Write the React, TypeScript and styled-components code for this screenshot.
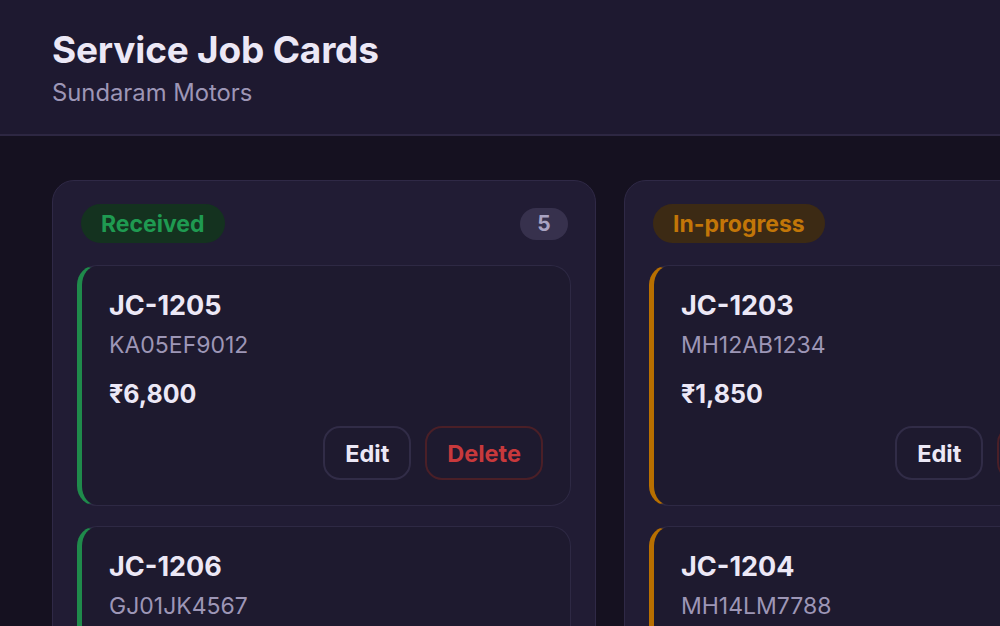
import styled, { createGlobalStyle } from "styled-components";

const colors = {
  page: "#151120",
  header: "#1e1930",
  headerLine: "#2d2742",
  column: "#211c34",
  columnBorder: "#2f2946",
  card: "#1e1a2f",
  cardBorder: "#2e2944",
  text: "#ece8f6",
  muted: "#9d96b6",
  danger: "#c8393c",
  dangerBorder: "#4a1f27",
};

const statuses = {
  received: { label: "Received", fg: "#1f9a51", bg: "#14321f", bar: "#1f8a4b" },
  progress: { label: "In-progress", fg: "#c27608", bg: "#3c2a14", bar: "#b86f00" },
};

type StatusKey = keyof typeof statuses;

const GlobalStyle = createGlobalStyle`
  html, body {
    margin: 0;
    padding: 0;
    background: ${colors.page};
    overflow: hidden;
  }
  body {
    font-family: Inter, "Noto Sans", sans-serif;
    color: ${colors.text};
  }
`;

const Page = styled.div`
  min-height: 100vh;
  background: ${colors.page};
`;

const Header = styled.header`
  background: ${colors.header};
  border-bottom: 2px solid ${colors.headerLine};
  padding: 28px 52px 26px;
`;

const Title = styled.h1`
  margin: 0;
  font-size: 37px;
  line-height: 44px;
  font-weight: 700;
  letter-spacing: -0.2px;
`;

const Subtitle = styled.div`
  margin-top: 6px;
  font-size: 23.8px;
  line-height: 30px;
  color: ${colors.muted};
`;

const Board = styled.main`
  display: flex;
  gap: 28px;
  padding: 44px 52px;
`;

const Column = styled.section`
  flex: 0 0 544px;
  box-sizing: border-box;
  background: ${colors.column};
  border: 1px solid ${colors.columnBorder};
  border-radius: 22px;
  padding: 23px 24px;
  display: flex;
  flex-direction: column;
  gap: 20px;
`;

const ColumnHead = styled.div`
  display: flex;
  align-items: center;
  justify-content: space-between;
  padding: 0 3px 0 4px;
  margin-bottom: 2px;
`;

const Pill = styled.span<{ $status: StatusKey }>`
  display: inline-flex;
  align-items: center;
  height: 39px;
  padding: 0 20px;
  border-radius: 20px;
  font-size: 23px;
  font-weight: 700;
  color: ${(p) => statuses[p.$status].fg};
  background: ${(p) => statuses[p.$status].bg};
`;

const Count = styled.span`
  display: inline-flex;
  align-items: center;
  justify-content: center;
  min-width: 48px;
  height: 32px;
  border-radius: 16px;
  background: #37314d;
  color: #aaa3c2;
  font-size: 21px;
  font-weight: 700;
`;

const Card = styled.article<{ $status: StatusKey }>`
  background: ${colors.card};
  border: 1px solid ${colors.cardBorder};
  border-left: 5px solid ${(p) => statuses[p.$status].bar};
  border-radius: 20px;
  padding: 24px 27px 25px 27px;
`;

const JobId = styled.div`
  font-size: 27px;
  line-height: 32px;
  font-weight: 700;
`;

const Plate = styled.div`
  margin-top: 8px;
  font-size: 23px;
  line-height: 30px;
  color: ${colors.muted};
`;

const Amount = styled.div`
  margin-top: 18px;
  font-size: 25px;
  line-height: 32px;
  font-weight: 700;
`;

const Actions = styled.div`
  margin-top: 16px;
  display: flex;
  justify-content: flex-end;
  gap: 14px;
`;

const Button = styled.button<{ $danger?: boolean }>`
  height: 54px;
  padding: 0 20px;
  border-radius: 17px;
  background: transparent;
  border: 2px solid ${(p) => (p.$danger ? colors.dangerBorder : "#312c47")};
  color: ${(p) => (p.$danger ? colors.danger : colors.text)};
  font-family: inherit;
  font-size: 23.5px;
  font-weight: 700;
  cursor: pointer;
`;

const columns: { status: StatusKey; count: number; jobs: { id: string; plate: string; amount: string }[] }[] = [
  {
    status: "received",
    count: 5,
    jobs: [
      { id: "JC-1205", plate: "KA05EF9012", amount: "₹6,800" },
      { id: "JC-1206", plate: "GJ01JK4567", amount: "₹3,200" },
    ],
  },
  {
    status: "progress",
    count: 2,
    jobs: [
      { id: "JC-1203", plate: "MH12AB1234", amount: "₹1,850" },
      { id: "JC-1204", plate: "MH14LM7788", amount: "₹4,500" },
    ],
  },
];

const App = () => (
  <Page>
    <GlobalStyle />
    <Header>
      <Title>Service Job Cards</Title>
      <Subtitle>Sundaram Motors</Subtitle>
    </Header>
    <Board>
      {columns.map((col) => (
        <Column key={col.status}>
          <ColumnHead>
            <Pill $status={col.status}>{statuses[col.status].label}</Pill>
            <Count>{col.count}</Count>
          </ColumnHead>
          {col.jobs.map((job) => (
            <Card key={job.id} $status={col.status}>
              <JobId>{job.id}</JobId>
              <Plate>{job.plate}</Plate>
              <Amount>{job.amount}</Amount>
              <Actions>
                <Button>Edit</Button>
                <Button $danger>Delete</Button>
              </Actions>
            </Card>
          ))}
        </Column>
      ))}
    </Board>
  </Page>
);

export default App;
